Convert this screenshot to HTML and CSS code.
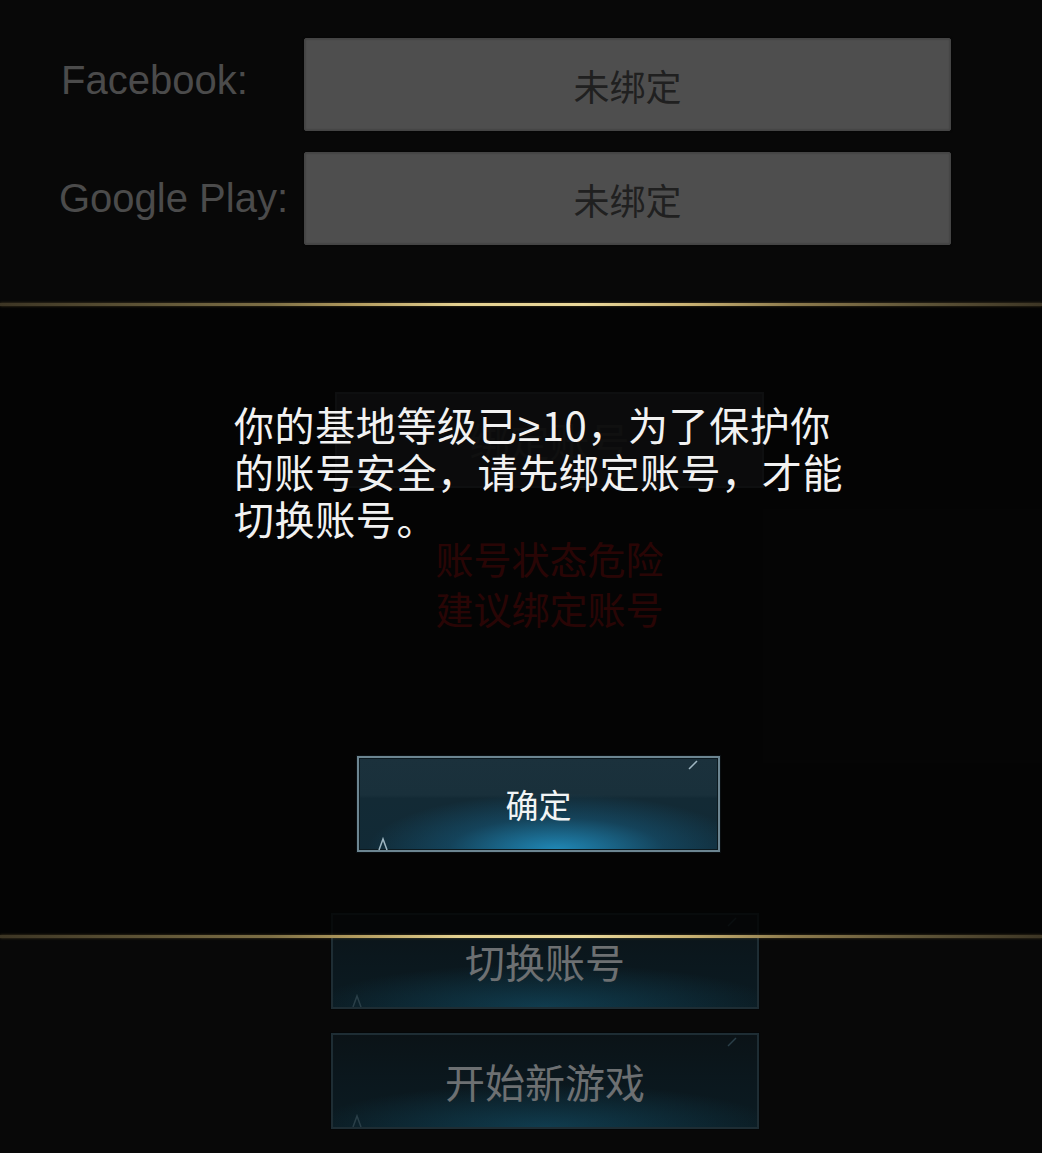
FILE: index.html
```html
<!DOCTYPE html>
<html lang="zh-CN">
<head>
<meta charset="utf-8">
<title>账号管理</title>
<link rel="stylesheet" href="styles.css">
</head>
<body>
<main class="screen">
  <section class="bindings">
    <div class="binding-row">
      <span class="binding-label binding-label--raised">Facebook:</span>
      <button class="binding-btn">未绑定</button>
    </div>
    <div class="binding-row">
      <span class="binding-label">Google Play:</span>
      <button class="binding-btn">未绑定</button>
    </div>
  </section>

  <section class="status">
    <button class="ghost-btn">绑定账号</button>
    <p class="status-warning">账号状态危险<br>建议绑定账号</p>
  </section>

  <section class="actions">
    <button class="hud-btn">
      <span>切换账号</span>
      <svg class="deco deco-notch" width="12" height="12" viewBox="0 0 12 12"><path d="M11 1 L3 9" /></svg>
      <svg class="deco deco-spike" width="14" height="14" viewBox="0 0 14 14"><path d="M2 14 L6 3 L10 14" /></svg>
    </button>
    <button class="hud-btn">
      <span>开始新游戏</span>
      <svg class="deco deco-notch" width="12" height="12" viewBox="0 0 12 12"><path d="M11 1 L3 9" /></svg>
      <svg class="deco deco-spike" width="14" height="14" viewBox="0 0 14 14"><path d="M2 14 L6 3 L10 14" /></svg>
    </button>
  </section>

  <div class="modal">
    <div class="modal-body">
      <p class="modal-text">你的基地等级已<span class="math">≥</span>10，为了保护你<br>的账号安全，请先绑定账号，才能<br>切换账号。</p>
      <button class="hud-btn hud-btn--primary">
        <span>确定</span>
        <svg class="deco deco-notch" width="12" height="12" viewBox="0 0 12 12"><path d="M11 1 L3 9" /></svg>
        <svg class="deco deco-spike" width="14" height="14" viewBox="0 0 14 14"><path d="M2 14 L6 3 L10 14" /></svg>
      </button>
    </div>
  </div>
</main>
</body>
</html>
```

FILE: styles.css
```css
* {
  box-sizing: border-box;
}

html,
body {
  margin: 0;
  height: 100%;
}

body {
  background: #080808;
  overflow: hidden;
  font-family: "Noto Sans CJK SC", "Noto Sans", sans-serif;
}

button {
  margin: 0;
  padding: 0;
  font-family: "Noto Sans CJK SC", "Noto Sans", sans-serif;
  cursor: pointer;
}

.screen {
  position: relative;
  height: 1153px;
  display: flex;
  flex-direction: column;
}

/* account binding rows */
.bindings {
  padding-top: 38px;
  display: flex;
  flex-direction: column;
  gap: 21px;
}

.binding-row {
  display: grid;
  grid-template-columns: 304px 647px;
  align-items: center;
  height: 93px;
}

.binding-label {
  padding-left: 59px;
  font-family: "Liberation Sans", Arial, sans-serif;
  font-size: 40px;
  color: #4b4b4b;
  white-space: nowrap;
}

.binding-label--raised {
  padding-left: 61px;
  margin-bottom: 8px;
}

.binding-btn {
  height: 93px;
  background: #4e4e4e;
  border: 1px solid #444;
  border-radius: 2px;
  box-shadow: 0 0 2px rgba(0, 0, 0, 0.7), inset 0 0 2px rgba(0, 0, 0, 0.35);
  font-size: 36px;
  color: #202020;
}

/* account status block */
.status {
  margin-top: 147px;
  padding-left: 335px;
  display: flex;
  flex-direction: column;
  align-items: flex-start;
}

.ghost-btn {
  width: 429px;
  height: 96px;
  background: #2c3133;
  border: 2px solid #3d4549;
  font-size: 40px;
  color: #484848;
}

.status-warning {
  margin: 45px 0 0;
  width: 429px;
  text-align: center;
  font-size: 38px;
  line-height: 50px;
  color: #d40f0f;
}

/* main actions */
.actions {
  margin-top: 280px;
  padding-left: 331px;
  display: flex;
  flex-direction: column;
  gap: 24px;
}

.hud-btn {
  position: relative;
  width: 428px;
  height: 96px;
  display: flex;
  align-items: center;
  justify-content: center;
  border: 2px solid #1e2d34;
  box-shadow: 0 0 0 1px #040607;
  background:
    radial-gradient(ellipse 65% 55% at 50% 100%, rgba(22, 100, 132, 0.45), rgba(22, 100, 132, 0) 85%),
    linear-gradient(180deg, #0b1317 0%, #0b171d 45%, #0b1b22 100%);
  font-size: 40px;
  color: #6d7072;
}

.hud-btn span {
  position: relative;
}

.deco {
  position: absolute;
  fill: none;
  stroke: #2a3f48;
  stroke-width: 1.5;
}

.deco-notch {
  top: 2px;
  right: 20px;
}

.deco-spike {
  bottom: 0;
  left: 18px;
}

/* modal dialog band */
.modal {
  position: absolute;
  left: 0;
  right: 0;
  top: 303px;
  height: 635px;
  background: rgba(4, 4, 4, 0.82);
}

.modal::before,
.modal::after {
  content: "";
  position: absolute;
  left: 0;
  right: 0;
  height: 3px;
  background: linear-gradient(90deg,
    #3c3524 0%,
    #5e5436 14%,
    #7d6f45 26%,
    #b29b5e 34%,
    #e4d190 44%,
    #ead89a 56%,
    #c9b273 66%,
    #8c7a4c 76%,
    #5f5538 88%,
    #3c3524 100%);
  box-shadow: 0 0 3px rgba(200, 170, 90, 0.35);
}

.modal::before {
  top: 0;
}

.modal::after {
  bottom: 0;
}

.modal-body {
  padding: 98px 0 0 234px;
  display: flex;
  flex-direction: column;
  align-items: flex-start;
}

.modal-text {
  margin: 0;
  font-size: 40px;
  line-height: 47px;
  letter-spacing: 0.6px;
  color: #f2f2f2;
  white-space: nowrap;
}

.modal-text .math {
  font-family: "Liberation Sans", Arial, sans-serif;
  line-height: 0;
  margin-right: 1px;
}

.hud-btn--primary {
  width: 363px;
  margin: 214px 0 0 123px;
  border: 2px solid #6c8591;
  box-shadow: 0 0 0 1px #0a0f12, inset 0 0 0 1px #0c1a20;
  background:
    radial-gradient(ellipse 60% 70% at 55% 100%, rgba(36, 160, 215, 0.8), rgba(24, 104, 145, 0.4) 50%, rgba(20, 70, 100, 0) 88%),
    linear-gradient(180deg, #1b313c 0%, #19303b 40%, #132a35 44%, #112a36 100%);
  font-size: 33px;
  color: #f2f4f5;
}

.hud-btn--primary .deco {
  stroke: #9fb7c2;
}
```
